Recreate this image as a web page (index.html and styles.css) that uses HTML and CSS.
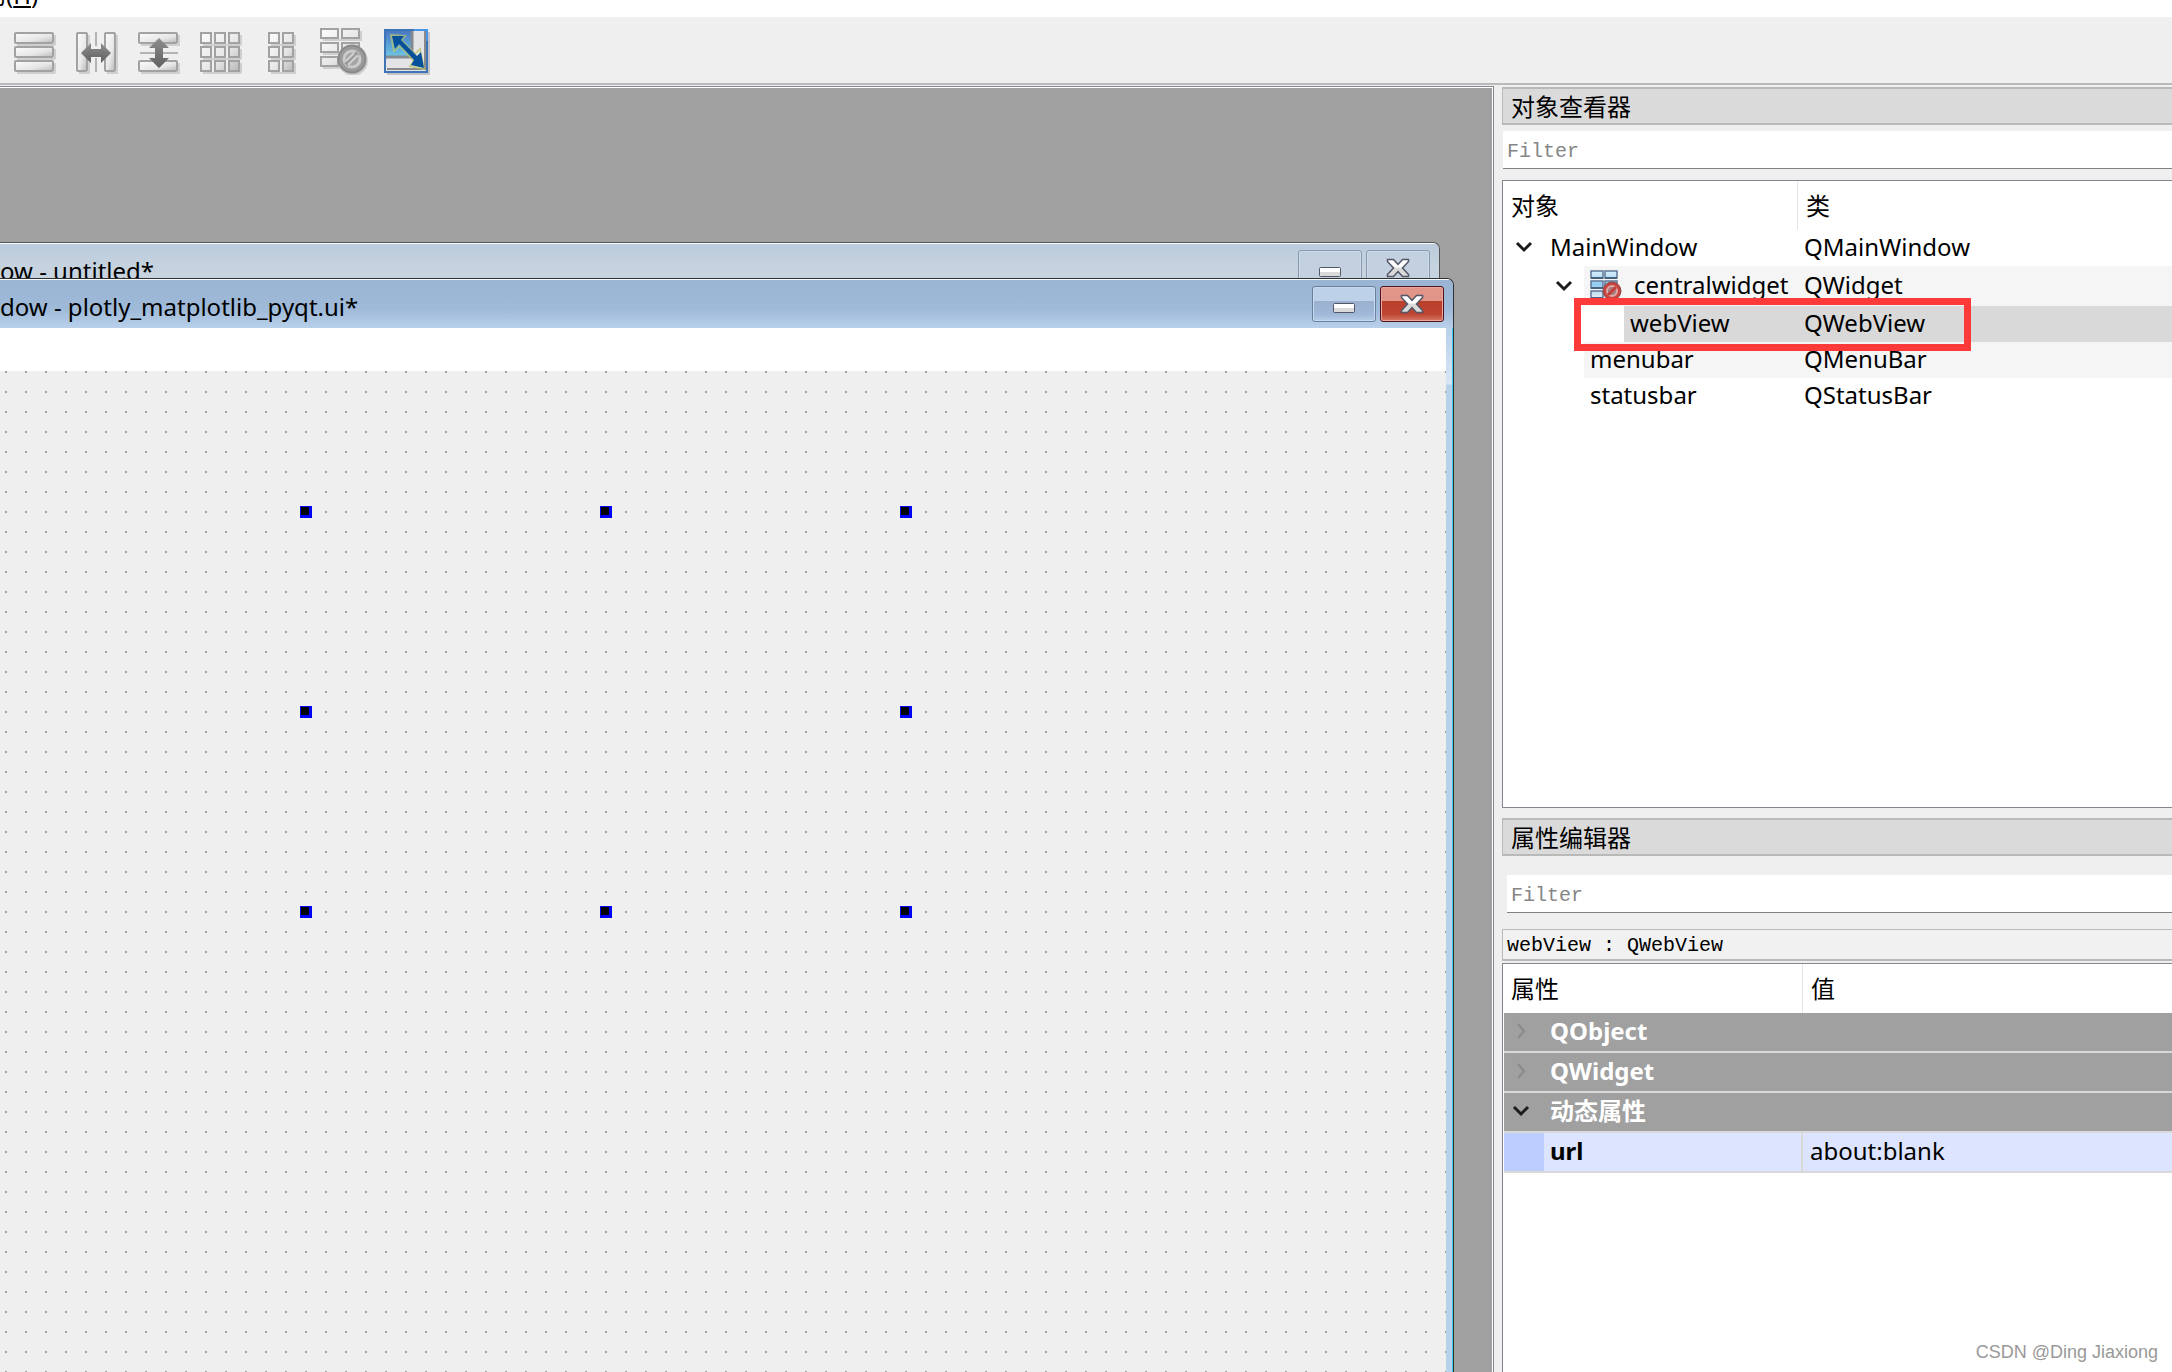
FILE: index.html
```html
<!DOCTYPE html>
<html lang="zh-CN">
<head>
<meta charset="utf-8">
<title>Qt Designer</title>
<link rel="stylesheet" href="styles.css">
</head>
<body>
<svg class="defs" width="0" height="0" aria-hidden="true">
  <defs>
    <linearGradient id="bar" x1="0" y1="0" x2="1" y2="1"><stop offset="0" stop-color="#fcfcfc"/><stop offset=".6" stop-color="#e6e6e6"/><stop offset="1" stop-color="#b8b8b8"/></linearGradient>
    <linearGradient id="arrow" x1="0" y1="0" x2="0" y2="1"><stop offset="0" stop-color="#8e8e8e"/><stop offset="1" stop-color="#606060"/></linearGradient>
    <linearGradient id="sky" x1="0" y1="0" x2="0" y2="1"><stop offset="0" stop-color="#4a78c4"/><stop offset="1" stop-color="#6cc4e4"/></linearGradient>
    <linearGradient id="cell" x1="0" y1="0" x2="0" y2="1"><stop offset="0" stop-color="#d8f0fc"/><stop offset=".5" stop-color="#8fcdf0"/><stop offset="1" stop-color="#e8eef4"/></linearGradient>
    <linearGradient id="metal" x1="0" y1="0" x2="0" y2="1"><stop offset=".45" stop-color="#fff"/><stop offset=".5" stop-color="#dadada"/></linearGradient>
    <symbol id="cross" viewBox="0 0 24 20"><path d="M1.500 1.500h6l4.500 5 4.500-5h6v2l-6 6.500 6 6.500v2h-6l-4.500-5-4.500 5h-6v-2l6-6.500-6-6.500z" fill="url(#metal)" stroke="#535666" stroke-width="1.500"/></symbol>
    <symbol id="dash" viewBox="0 0 22 10"><rect x=".5" y=".5" width="21" height="9" rx="1" fill="url(#metal)" stroke="#535666"/></symbol>
    <symbol id="down" viewBox="0 0 18 12"><path d="M2 2l7 7 7-7" fill="none" stroke="#1c1c1c" stroke-width="3"/></symbol>
    <symbol id="right" viewBox="0 0 12 18"><path d="M3 2l6 7-6 7" fill="none" stroke="#8a8a8a" stroke-width="2"/></symbol>
  </defs>
</svg>

<nav class="menubar"><a class="menu" href="#help">助(<u>H</u>)</a></nav>

<div class="toolbar" role="toolbar">
  <button class="tool" aria-label="垂直布局"><svg viewBox="0 0 48 48" fill="url(#bar)" stroke="#a2a2a2" stroke-width="2"><path d="M7 18h38M45 8v10M7 32h38M45 22v10M7 46h38M45 36v10" stroke="#cfcfcf"/><rect x="5" y="6" width="38" height="10" rx="1"/><rect x="5" y="20" width="38" height="10" rx="1"/><rect x="5" y="34" width="38" height="10" rx="1"/></svg></button>
  <button class="tool" aria-label="水平分裂器布局"><svg viewBox="0 0 48 48" fill="url(#bar)" stroke="#a2a2a2" stroke-width="2"><path d="M17 8v38H7M45 8v38H35" fill="none" stroke="#cfcfcf"/><rect x="5" y="6" width="10" height="38" rx="1"/><rect x="33" y="6" width="10" height="38" rx="1"/><path d="M24 5v40" stroke-dasharray="14 12" stroke="#777" stroke-width="1"/><path d="M9 26l10-10v6h10v-6l10 10-10 10v-6H19v6z" fill="url(#arrow)" stroke="none"/></svg></button>
  <button class="tool" aria-label="垂直分裂器布局"><svg viewBox="0 0 48 48" fill="url(#bar)" stroke="#a2a2a2" stroke-width="2"><path d="M7 18h38V8M7 46h38V36" fill="none" stroke="#cfcfcf"/><rect x="5" y="6" width="38" height="10" rx="1"/><rect x="5" y="34" width="38" height="10" rx="1"/><path d="M6 26h38" stroke="#777" stroke-width="1"/><path d="M25 11l10 10h-6v10h6L25 41 15 31h6V21h-6z" fill="url(#arrow)" stroke="none"/></svg></button>
  <button class="tool" aria-label="栅格布局"><svg viewBox="0 0 48 48" fill="url(#bar)" stroke="#a2a2a2" stroke-width="2"><path d="M7 18h38M45 8v10M7 32h38M45 22v10M7 46h38M45 36v10" stroke="#cfcfcf"/><path d="M5 6h10v10H5zM19 6h10v10H19zM33 6h10v10H33zM5 20h10v10H5zM19 20h10v10H19zM33 20h10v10H33zM5 34h10v10H5zM19 34h10v10H19zM33 34h10v10H33z"/></svg></button>
  <button class="tool" aria-label="表单布局"><svg viewBox="0 0 48 48" fill="url(#bar)" stroke="#a2a2a2" stroke-width="2"><path d="M13 18h24V8M13 32h24V22M13 46h24V36" fill="none" stroke="#cfcfcf"/><path d="M11 6h10v10H11zM25 6h10v10H25zM11 20h10v10H11zM25 20h10v10H25zM11 34h10v10H11zM25 34h10v10H25z"/></svg></button>
  <button class="tool" aria-label="打破布局"><svg viewBox="0 0 48 48" fill="url(#bar)" stroke="#a2a2a2" stroke-width="2"><path d="M3 13h38V4M3 27h38M3 41h17" fill="none" stroke="#cfcfcf"/><path d="M1 2h17v9H1zM22 2h17v9H22zM1 16h17v9H1zM22 16h17v9H22zM1 30h17v9H1z"/><circle cx="33" cy="34" r="14" fill="#bbb" stroke="#d0d0d0"/><circle cx="32" cy="32" r="13.500" fill="#9a9a9a" stroke="#8a8a8a"/><circle cx="32" cy="32" r="8" fill="#a4a4a4" stroke="#cacaca" stroke-width="3"/><path d="M26 38l12-12" stroke="#9a9a9a" stroke-width="5"/><path d="M28 38l10-10M26 34l8-8" stroke="#d0d0d0" stroke-width="2"/></svg></button>
  <button class="tool" aria-label="调整大小"><svg viewBox="0 0 48 48"><path d="M5 47h42V5" fill="none" stroke="#c4c4c8" stroke-width="2"/><rect x="3" y="3" width="42" height="42" fill="#e4e4e6" stroke="#3d74b6" stroke-width="2"/><path d="M32 3h13v11" fill="none" stroke="#4796ec" stroke-width="2"/><rect x="4" y="4" width="25" height="25" fill="url(#sky)"/><path d="M30 4v26H4" fill="none" stroke="#858a90" stroke-width="3"/><path d="M43 4v38H5" fill="none" stroke="#8a8a8a" stroke-width="2"/><path d="M9 8l14 1-4 4 14 14 5-5 4 20-14-3 4-5-14-15-6 5z" fill="none" stroke="#b8c46a" stroke-width="2" opacity=".7"/><path d="M10 9h12l-3 4 16 16 4-4 3 16-13-3 3-5-15-16-4 5z" fill="#07509a"/></svg></button>
</div>

<main class="workspace">
  <section class="mdi">
    <div class="window window-back">
      <div class="titlebar"><span class="title">ow - untitled*</span>
        <button class="winbtn" aria-label="最小化"><svg class="dash"><use href="#dash"/></svg></button>
        <button class="winbtn" aria-label="关闭"><svg class="cross"><use href="#cross"/></svg></button></div>
    </div>
    <div class="window window-front">
      <div class="titlebar"><span class="title">dow - plotly_matplotlib_pyqt.ui*</span>
        <button class="winbtn" aria-label="最小化"><svg class="dash"><use href="#dash"/></svg></button>
        <button class="winbtn close" aria-label="关闭"><svg class="cross"><use href="#cross"/></svg></button></div>
      <div class="frame">
        <div class="form">
          <div class="formmenu"></div>
          <div class="canvas">
            <div class="selection"><i class="h nw"></i><i class="h n"></i><i class="h ne"></i><i class="h w"></i><i class="h e"></i><i class="h sw"></i><i class="h s"></i><i class="h se"></i></div>
          </div>
        </div>
      </div>
    </div>
  </section>

  <aside class="dock">
    <section class="inspector">
      <h2 class="docktitle">对象查看器</h2>
      <input class="filter" type="text" placeholder="Filter" aria-label="Filter objects">
      <div class="box tree">
        <table>
          <colgroup><col class="c-object"><col></colgroup>
          <thead><tr><th>对象</th><th>类</th></tr></thead>
          <tbody>
            <tr><td><span class="cell l0"><svg class="chev"><use href="#down"/></svg>MainWindow</span></td><td>QMainWindow</td></tr>
            <tr class="tall"><td><span class="cell l1"><svg class="chev"><use href="#down"/></svg><span class="fill alt"><svg class="layout" viewBox="0 0 32 30"><g fill="url(#cell)" stroke="#5f7898" stroke-width="1.500"><path d="M1 1h12v7H1zM15 1h12v7H15zM1 11h12v7H1zM15 11h12v7H15zM1 21h12v7H1z"/></g><path d="M1 8h12M15 8h12M1 18h12M15 18h12M1 28h12" stroke="#48627f" stroke-width="2"/><circle cx="22" cy="21" r="9" fill="#c5443e" stroke="#8c4a4a"/><circle cx="22" cy="21" r="5" fill="#a87c80" stroke="#e0a8a4" stroke-width="2"/><path d="M18 25l8-8" stroke="#c0403a" stroke-width="3"/></svg>centralwidget</span></span></td><td class="alt">QWidget</td></tr>
            <tr><td><span class="cell l2"><span class="fill sel">webView</span></span></td><td class="sel">QWebView</td></tr>
            <tr><td><span class="cell l1x"><span class="fill alt">menubar</span></span></td><td class="alt">QMenuBar</td></tr>
            <tr><td><span class="cell l1x"><span class="fill">statusbar</span></span></td><td>QStatusBar</td></tr>
          </tbody>
        </table>
        <div class="marker"></div>
      </div>
    </section>

    <section class="properties">
      <h2 class="docktitle">属性编辑器</h2>
      <input class="filter inset" type="text" placeholder="Filter" aria-label="Filter properties">
      <p class="current">webView : QWebView</p>
      <div class="box props">
        <table>
          <colgroup><col class="c-prop"><col></colgroup>
          <thead><tr><th>属性</th><th>值</th></tr></thead>
          <tbody>
            <tr class="group"><th colspan="2"><span class="cell"><svg class="chev"><use href="#right"/></svg>QObject</span></th></tr>
            <tr class="group"><th colspan="2"><span class="cell"><svg class="chev"><use href="#right"/></svg>QWidget</span></th></tr>
            <tr class="group"><th colspan="2"><span class="cell"><svg class="chev"><use href="#down"/></svg>动态属性</span></th></tr>
            <tr class="prop"><th>url</th><td>about:blank</td></tr>
          </tbody>
        </table>
      </div>
    </section>
  </aside>
</main>
<div class="watermark">CSDN @Ding Jiaxiong</div>
</body>
</html>
```

FILE: styles.css
```css
* { box-sizing: border-box; }

body {
  margin: 0;
  height: 100vh;
  display: flex;
  flex-direction: column;
  overflow: hidden;
  background: #efefef;
  color: #000;
  font: 24px/36px "Noto Sans", "Noto Sans CJK SC", sans-serif;
}

.defs { position: absolute; }
button { font: inherit; padding: 0; margin: 0; }
svg { display: block; }

/* Menu and tool bars */
.menubar {
  flex: none;
  display: flex;
  align-items: flex-end;
  height: 18px;
  background: #fff;
  border-bottom: 1px solid #f0f0f0;
  overflow: hidden;
}
.menu {
  margin: 0 0 4px -18px;
  line-height: 36px;
  color: inherit;
  text-decoration: none;
}

.toolbar {
  flex: none;
  display: flex;
  gap: 14px;
  height: 67px;
  padding: 9px 10px 0;
  border-bottom: 2px solid #b9b9b9;
}
.tool { width: 48px; height: 48px; border: 0; background: none; }
.tool svg { width: 48px; height: 48px; }

.workspace {
  flex: 1;
  display: flex;
  gap: 8px;
  min-height: 0;
  padding-top: 1px;
}

/* Form windows */
.mdi {
  flex: 1;
  position: relative;
  overflow: hidden;
  background: #a0a0a0;
  border: solid #828790;
  border-width: 1px 1px 0 0;
  box-shadow: inset -1px 1px 0 #fff;
}
.window {
  position: absolute;
  left: 0;
  display: flex;
  flex-direction: column;
  border: 1px solid #303030;
  border-width: 1px 1px 0 0;
  border-radius: 0 7px 0 0;
  overflow: hidden;
}
.window-back { top: 155px; right: 53px; height: 60px; border-color: #555; }
.window-front { top: 191px; right: 39px; bottom: 0; }

.titlebar {
  flex: none;
  display: flex;
  gap: 4px;
  height: 49px;
  padding: 6px 9px 0 0;
  border-top: 1px solid #f6fbff;
  background: linear-gradient(#9ab5d3, #9fbad8 60%, #b8d0ea);
}
.window-back .titlebar { background: linear-gradient(#bccbdd, #c6d3df 50%, #c8d5e0); }
.title { flex: 1; padding-top: 3px; white-space: nowrap; }

.winbtn {
  display: flex;
  justify-content: center;
  width: 64px;
  height: 36px;
  border: 1px solid #6a7f9f;
  border-radius: 3px;
  background: linear-gradient(#bdd1e9 40%, #9ab0cf 40%, #a0b8d8 80%, #b8cfe9);
  box-shadow: inset 0 0 0 1px #c8daee;
}
.window-back .winbtn { background: #c2d0e0; border-color: #8898b4; box-shadow: inset 0 0 0 1px #cedae6; }
.winbtn.close {
  border-color: #50121c;
  background: linear-gradient(#e19488 40%, #b93f2a 40%, #bd4632 80%, #d87a6a);
  box-shadow: inset 0 0 0 1px #e8a89e;
}
.dash { width: 22px; height: 10px; margin-top: 16px; }
.cross { width: 24px; height: 20px; margin-top: 7px; }

.frame {
  flex: 1;
  display: flex;
  padding-right: 6px;
  border-right: 1px solid #35d0f4;
  background: linear-gradient(#b8d0ea, #d8e6f5 56px, #b8d1ea 57px);
}
.form { flex: 1; display: flex; flex-direction: column; background: #efefef; }
.formmenu { height: 43px; background: #fff; }
.canvas {
  flex: 1;
  position: relative;
  background: conic-gradient(from 270deg at 2px 2px, #a0a0a0 90deg, transparent 0) 5px 0 / 20px 20px;
}
.selection { position: absolute; left: 300px; top: 135px; width: 612px; height: 412px; }
.h { position: absolute; width: 12px; height: 12px; background: #000; border: solid #00f; border-width: 1px 3px 3px 1px; }
.nw, .n, .ne { top: 0; }
.w, .e { top: 200px; }
.sw, .s, .se { bottom: 0; }
.nw, .w, .sw { left: 0; }
.n, .s { left: 300px; }
.ne, .e, .se { right: 0; }

/* Dock panels */
.dock {
  flex: none;
  width: 670px;
  display: flex;
  flex-direction: column;
  gap: 10px;
  padding-top: 1px;
}
.inspector { flex: none; display: flex; flex-direction: column; }
.properties { flex: 1; display: flex; flex-direction: column; min-height: 0; }

.docktitle {
  flex: none;
  height: 38px;
  margin: 0;
  padding-left: 8px;
  border: solid #b9b9b9;
  border-width: 2px 0 2px 1px;
  background: #dadada;
  font-size: 24px;
  font-weight: 400;
  line-height: 36px;
}
.filter {
  flex: none;
  height: 38px;
  margin: 6px 0 11px 1px;
  padding: 4px 4px 0;
  border: 0;
  border-bottom: 1px solid #828282;
  border-radius: 0;
  background: #fff;
  font: 20px/32px "Liberation Mono", monospace;
}
.filter.inset { margin: 19px 0 16px 5px; }
.filter::placeholder { color: #858585; opacity: 1; }
.current {
  flex: none;
  height: 32px;
  margin: 0 0 2px;
  padding-left: 4px;
  border: solid #b9b9b9;
  border-width: 1px 0 2px 1px;
  background: #f1f1f1;
  font: 20px/32px "Liberation Mono", monospace;
}

.box { border: 1px solid #828790; border-right: 0; background: #fff; }
.tree { position: relative; height: 628px; }
.props { flex: 1; border-bottom: 0; padding-left: 1px; }

table { width: 100%; table-layout: fixed; border-collapse: separate; border-spacing: 0; }
th, td { padding: 0; text-align: left; font-weight: 400; white-space: nowrap; line-height: 34px; }
.c-object { width: 295px; }
.c-prop { width: 299px; }
thead th { height: 49px; padding-left: 8px; }
thead th:first-child { border-right: 1px solid #e5e5e5; }
.props thead th:first-child { padding-left: 7px; }
.tree tbody td { height: 36px; padding-bottom: 2px; }
.tree .tall td { height: 40px; }
.tree tbody td:first-child { padding-bottom: 0; }
.tree tbody td:last-child { padding-left: 6px; }
.cell { display: flex; align-items: center; height: 36px; padding-bottom: 2px; }
.tall .cell { height: 40px; }
.cell .chev { width: 18px; height: 12px; margin: 0 17px 0 12px; }
.l1 { padding: 0 0 0 40px; }
.l1 .chev { margin-right: 11px; }
.l1x { padding: 0 0 0 81px; }
.l2 { padding: 0 0 0 121px; }
.fill { flex: 1; display: flex; align-items: center; height: 36px; padding: 0 0 2px 6px; }
.tall .fill { height: 40px; }
.layout { width: 32px; height: 30px; margin-right: 12px; }
.alt { background: #f5f5f5; }
.sel { background: #d9d9d9; }

.marker {
  position: absolute;
  left: 71px;
  top: 117px;
  width: 397px;
  height: 53px;
  border: 7px solid #fc3a3a;
}

.group th {
  height: 40px;
  background: #a0a0a0;
  border-bottom: 2px solid #d9d9d9;
  color: #fff;
  font-weight: 700;
}
.group .chev { width: 18px; margin: 0 20px 0 8px; }
.group .chev:has([href="#right"]) { height: 18px; }
.prop th, .prop td { height: 40px; padding-bottom: 2px; border-bottom: 2px solid #d9d9d9; }
.prop th {
  padding-left: 46px;
  border-right: 2px solid #d9d9d9;
  background: linear-gradient(90deg, #bccdff 40px, #dce4ff 40px);
  font-weight: 700;
}
.prop td { padding-left: 7px; background: #dce4ff; }

.watermark {
  position: absolute;
  right: 14px;
  bottom: 4px;
  color: #999;
  font: 18px/32px "Liberation Sans", sans-serif;
}
```
